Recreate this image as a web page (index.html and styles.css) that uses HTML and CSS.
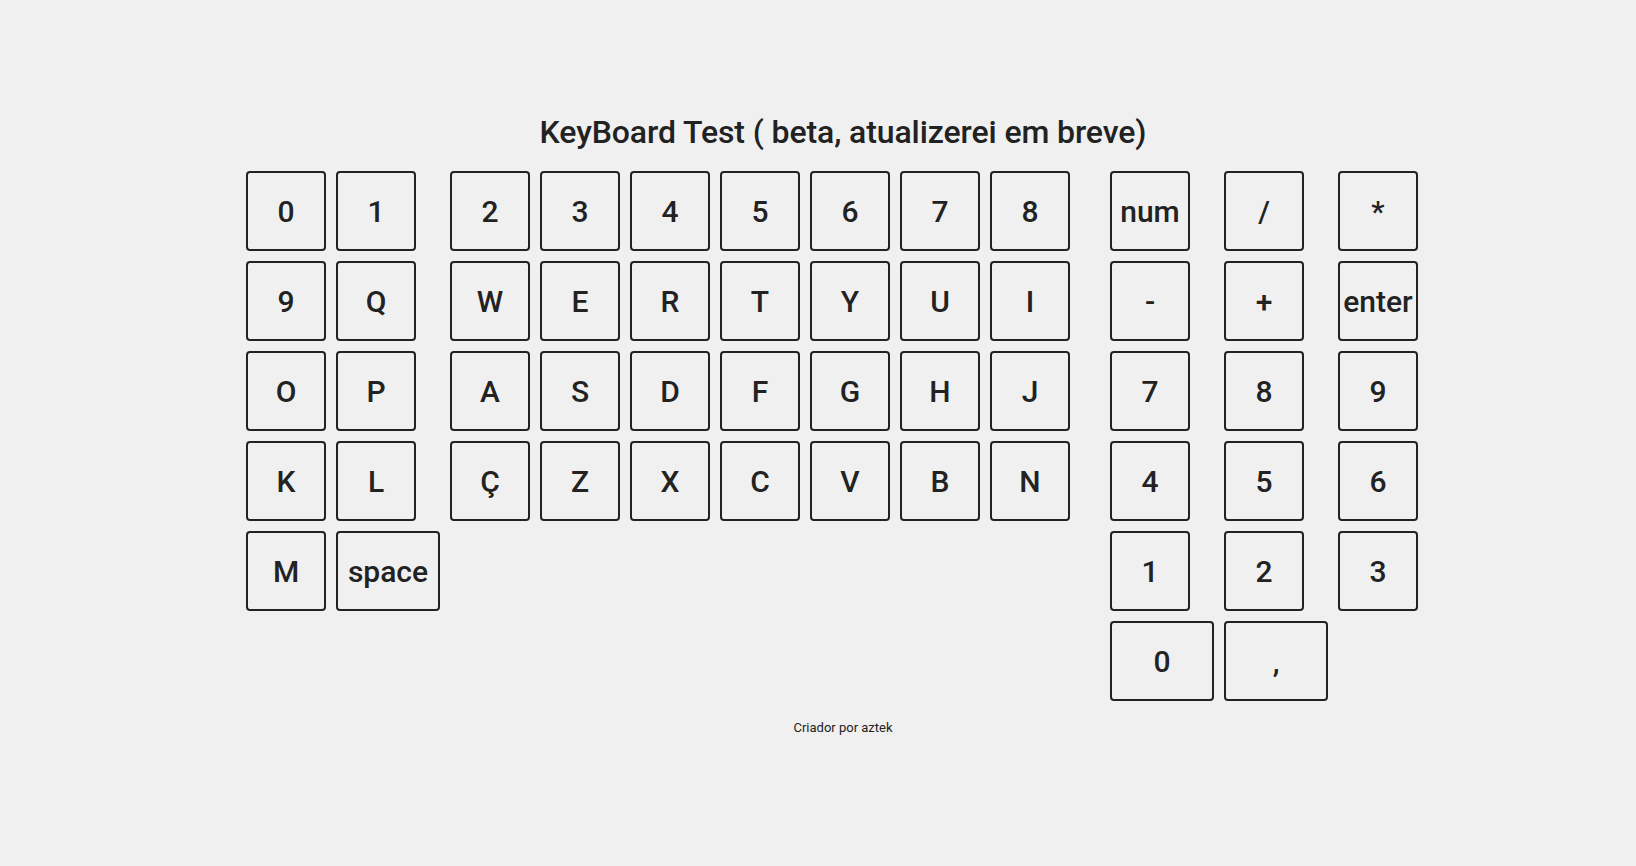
FILE: index.html
```html
<!DOCTYPE html>
<html lang="pt">
<head>
<meta charset="utf-8">
<title>KeyBoard Test</title>
<link rel="stylesheet" href="styles.css">
</head>
<body>
<main class="page">
  <h1 class="title">KeyBoard Test ( beta, atualizerei em breve)</h1>
  <div class="keyboard">
    <div class="group group-left">
      <div class="row"><div class="key">0</div><div class="key">1</div></div>
      <div class="row"><div class="key">9</div><div class="key">Q</div></div>
      <div class="row"><div class="key">O</div><div class="key">P</div></div>
      <div class="row"><div class="key">K</div><div class="key">L</div></div>
      <div class="row"><div class="key">M</div><div class="key key-wide">space</div></div>
    </div>
    <div class="group group-letters">
      <div class="row"><div class="key">2</div><div class="key">3</div><div class="key">4</div><div class="key">5</div><div class="key">6</div><div class="key">7</div><div class="key">8</div></div>
      <div class="row"><div class="key">W</div><div class="key">E</div><div class="key">R</div><div class="key">T</div><div class="key">Y</div><div class="key">U</div><div class="key">I</div></div>
      <div class="row"><div class="key">A</div><div class="key">S</div><div class="key">D</div><div class="key">F</div><div class="key">G</div><div class="key">H</div><div class="key">J</div></div>
      <div class="row"><div class="key">Ç</div><div class="key">Z</div><div class="key">X</div><div class="key">C</div><div class="key">V</div><div class="key">B</div><div class="key">N</div></div>
    </div>
    <div class="group group-numpad">
      <div class="row row-pad"><div class="key">num</div><div class="key">/</div><div class="key">*</div></div>
      <div class="row row-pad"><div class="key">-</div><div class="key">+</div><div class="key">enter</div></div>
      <div class="row row-pad"><div class="key">7</div><div class="key">8</div><div class="key">9</div></div>
      <div class="row row-pad"><div class="key">4</div><div class="key">5</div><div class="key">6</div></div>
      <div class="row row-pad"><div class="key">1</div><div class="key">2</div><div class="key">3</div></div>
      <div class="row"><div class="key key-wide">0</div><div class="key key-wide">,</div></div>
    </div>
  </div>
  <p class="footer">Criador por aztek</p>
</main>
</body>
</html>
```

FILE: styles.css
```css
html, body {
  margin: 0;
  padding: 0;
  background: #f0f0f0;
}

body {
  font-family: Roboto, "Liberation Sans", Arial, sans-serif;
  color: #222222;
}

.page {
  display: flex;
  flex-direction: column;
  align-items: stretch;
  padding-top: 113px;
}

.title {
  margin: 0;
  padding-left: 50px;
  text-align: center;
  font-size: 32px;
  line-height: 38px;
  font-weight: 500;
  letter-spacing: -0.1px;
  color: #222222;
}

.keyboard {
  display: flex;
  justify-content: center;
  align-items: flex-start;
  margin-top: 20px;
  padding-left: 28px;
}

.group {
  display: flex;
  flex-direction: column;
  gap: 10px;
}

.group-left {
  margin-right: 10px;
}

.group-letters {
  margin-right: 40px;
}

.row {
  display: flex;
  gap: 10px;
}

.row-pad {
  gap: 34px;
}

.key {
  box-sizing: border-box;
  width: 80px;
  height: 80px;
  border: 2px solid #222222;
  border-radius: 4px;
  background: #f0f0f0;
  display: flex;
  align-items: center;
  justify-content: center;
  font-size: 30px;
  font-weight: 500;
  color: #222222;
  white-space: nowrap;
}

.key-wide {
  width: 104px;
}

.footer {
  margin: 19px 0 0;
  padding-left: 50px;
  text-align: center;
  font-size: 13px;
  line-height: 15px;
  color: #222222;
}
```
